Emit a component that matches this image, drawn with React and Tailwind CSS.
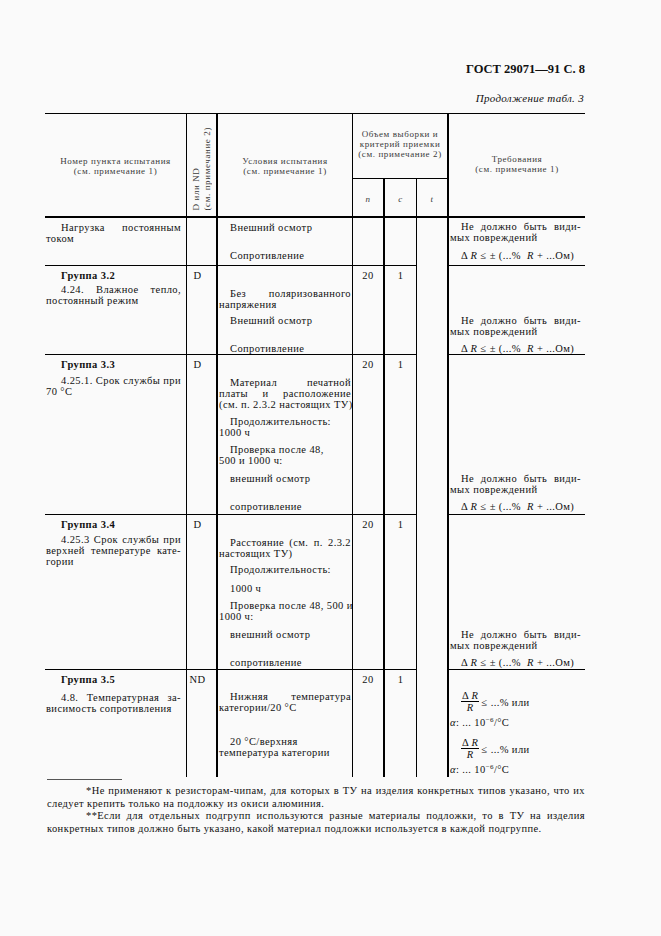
import React from 'react';

// column grid shared by header and body rows: 45 | 186 | 216 | 352 | 383 | 416 | 447 | 585
const COLS = 'grid grid-cols-[141px_30px_136px_31px_33px_31px_138px]';

const Line = ({ j, className = '', children }) => (
  <div className={`whitespace-nowrap ${j ? 'text-justify [text-align-last:justify]' : ''} ${className}`}>
    {children}
  </div>
);

const DeltaR = ({ className = '' }) => (
  <Line className={`pl-[11px] ${className}`}>
    Δ <i>R</i> ≤ ± (...%{'\u00a0\u00a0'}<i>R</i> + ...Ом)
  </Line>
);

const NoDamage = ({ className = '' }) => (
  <>
    <Line j className={`pl-[11px] ${className}`}>Не должно быть види-</Line>
    <Line>мых повреждений</Line>
  </>
);

const Frac = ({ className = '' }) => (
  <div className={`flex items-center pl-[11px] ${className}`}>
    <span className="flex flex-col items-center">
      <span className="border-b border-black px-[1px] leading-[10px]">Δ <i>R</i></span>
      <span className="leading-[10px] pt-[1px]"><i>R</i></span>
    </span>
    <span className="ml-[2px] mt-[1px] whitespace-nowrap">≤ ...% или</span>
  </div>
);

const Alpha = ({ className = '' }) => (
  <Line className={className}>
    <i>α</i>: ... 10<span className="relative -top-[4px] text-[7px]">−6</span>/°С
  </Line>
);

const Row = ({ h, last, a, d, cond, n, c, req }) => {
  const b = last ? '' : 'border-b border-black';
  return (
    <div className={`${COLS} ${h}`}>
      <div className={`pl-[1px] pr-[5px] ${b}`}>{a}</div>
      <div className={`flex justify-center pr-[8px] border-l border-black ${b}`}>{d}</div>
      <div className={`px-[1px] border-l-2 border-black ${b}`}>{cond}</div>
      <div className={`text-center border-l border-black ${b}`}>{n}</div>
      <div className={`text-center border-l-2 border-black ${b}`}>{c}</div>
      <div className="border-l border-black" />
      <div className={`pl-[1px] pr-[4px] border-l-2 border-black ${b}`}>{req}</div>
    </div>
  );
};

export default function App() {
  return (
    <div className="min-h-[936px] w-[661px] bg-[#fafafa] text-[#111] font-['Liberation_Serif',serif]">
      <div className="ml-[45px] w-[540px] pt-[62px]">
        <div className="text-right text-[12.5px] leading-[14px] font-bold">ГОСТ 29071—91 С. 8</div>
        <div className="mt-[16px] text-right text-[11px] leading-[12px] italic tracking-[0.3px] pr-[1px]">
          Продолжение табл. 3
        </div>

        {/* header */}
        <div className={`${COLS} grid-rows-[64px_38px] mt-[9px] border-t border-b-2 border-black text-[9px] leading-[10px] tracking-[0.6px] text-[#3a3a3a]`}>
          <div className="row-span-2 flex flex-col items-center justify-center pt-[2px]">
            <div>Номер пункта испытания</div>
            <div>(см. примечание 1)</div>
          </div>
          <div className="row-span-2 flex items-end justify-center pb-[6px] border-l border-black">
            <div className="[writing-mode:vertical-rl] rotate-180 leading-[11px] whitespace-nowrap">
              <div>D или ND</div>
              <div>(см. примечание 2)</div>
            </div>
          </div>
          <div className="row-span-2 flex flex-col items-center justify-center pt-[2px] border-l-2 border-black">
            <div>Условия испытания</div>
            <div>(см. примечание 1)</div>
          </div>
          <div className="col-span-3 flex flex-col items-center justify-center pb-[4px] border-l border-black">
            <div>Объем выборки и</div>
            <div>критерий приемки</div>
            <div>(см. примечание 2)</div>
          </div>
          <div className="row-span-2 flex flex-col items-center justify-center pb-[3px] border-l-2 border-black">
            <div>Требования</div>
            <div>(см. примечание 1)</div>
          </div>
          <div className="flex items-center justify-center pt-[3px] italic border-l border-t border-black">n</div>
          <div className="flex items-center justify-center pt-[3px] italic border-l-2 border-t border-black">c</div>
          <div className="flex items-center justify-center pt-[3px] italic border-l border-t border-black">t</div>
        </div>

        {/* body */}
        <div className="text-[10.5px] leading-[11px] tracking-[0.4px]">
          <Row
            h="h-[48px]"
            a={
              <>
                <Line j className="pl-[15px] mt-[4px]">Нагрузка постоянным</Line>
                <Line>током</Line>
              </>
            }
            cond={
              <>
                <Line className="pl-[11px] mt-[4px]">Внешний осмотр</Line>
                <Line className="pl-[11px] mt-[17px]">Сопротивление</Line>
              </>
            }
            req={
              <>
                <NoDamage className="mt-[3px]" />
                <DeltaR className="mt-[7px]" />
              </>
            }
          />

          <Row
            h="h-[89px]"
            a={
              <>
                <Line className="pl-[15px] mt-[4px] font-bold">Группа 3.2</Line>
                <Line j className="pl-[15px] mt-[3px]">4.24. Влажное тепло,</Line>
                <Line>постоянный режим</Line>
              </>
            }
            d={<Line className="mt-[4px]">D</Line>}
            cond={
              <>
                <Line j className="pl-[11px] mt-[22px]">Без поляризованного</Line>
                <Line>напряжения</Line>
                <Line className="pl-[11px] mt-[5px]">Внешний осмотр</Line>
                <Line className="pl-[11px] mt-[17px]">Сопротивление</Line>
              </>
            }
            n={<Line className="mt-[4px]">20</Line>}
            c={<Line className="mt-[4px]">1</Line>}
            req={
              <>
                <NoDamage className="mt-[49px]" />
                <DeltaR className="mt-[6px]" />
              </>
            }
          />

          <Row
            h="h-[160px]"
            a={
              <>
                <Line className="pl-[15px] mt-[4px] font-bold">Группа 3.3</Line>
                <Line j className="pl-[15px] mt-[5px]">4.25.1. Срок службы при</Line>
                <Line>70 °С</Line>
              </>
            }
            d={<Line className="mt-[4px]">D</Line>}
            cond={
              <>
                <Line j className="pl-[11px] mt-[22px]">Материал печатной</Line>
                <Line j>платы и расположение</Line>
                <Line j>(см. п. 2.3.2 настоящих ТУ)</Line>
                <Line className="pl-[11px] mt-[6px]">Продолжительность:</Line>
                <Line>1000 ч</Line>
                <Line className="pl-[11px] mt-[6px]">Проверка после 48,</Line>
                <Line>500 и 1000 ч:</Line>
                <Line className="pl-[11px] mt-[7px]">внешний осмотр</Line>
                <Line className="pl-[11px] mt-[17px]">сопротивление</Line>
              </>
            }
            n={<Line className="mt-[4px]">20</Line>}
            c={<Line className="mt-[4px]">1</Line>}
            req={
              <>
                <NoDamage className="mt-[118px]" />
                <DeltaR className="mt-[6px]" />
              </>
            }
          />

          <Row
            h="h-[155px]"
            a={
              <>
                <Line className="pl-[15px] mt-[4px] font-bold">Группа 3.4</Line>
                <Line j className="pl-[15px] mt-[4px]">4.25.3 Срок службы при</Line>
                <Line j>верхней температуре кате-</Line>
                <Line>гории</Line>
              </>
            }
            d={<Line className="mt-[4px]">D</Line>}
            cond={
              <>
                <Line j className="pl-[11px] mt-[22px]">Расстояние (см. п. 2.3.2</Line>
                <Line>настоящих ТУ)</Line>
                <Line className="pl-[11px] mt-[5px]">Продолжительность:</Line>
                <Line className="pl-[11px] mt-[8px]">1000 ч</Line>
                <Line j className="pl-[11px] mt-[6px]">Проверка после 48, 500 и</Line>
                <Line>1000 ч:</Line>
                <Line className="pl-[11px] mt-[7px]">внешний осмотр</Line>
                <Line className="pl-[11px] mt-[17px]">сопротивление</Line>
              </>
            }
            n={<Line className="mt-[4px]">20</Line>}
            c={<Line className="mt-[4px]">1</Line>}
            req={
              <>
                <NoDamage className="mt-[114px]" />
                <DeltaR className="mt-[6px]" />
              </>
            }
          />

          <Row
            h="h-[105px]"
            last
            a={
              <>
                <Line className="pl-[15px] mt-[4px] font-bold">Группа 3.5</Line>
                <Line j className="pl-[15px] mt-[7px]">4.8. Температурная за-</Line>
                <Line>висимость сопротивления</Line>
              </>
            }
            d={<Line className="mt-[4px]">ND</Line>}
            cond={
              <>
                <Line j className="pl-[11px] mt-[21px]">Нижняя температура</Line>
                <Line>категории/20 °С</Line>
                <Line className="pl-[11px] mt-[23px]">20 °С/верхняя</Line>
                <Line>температура категории</Line>
              </>
            }
            n={<Line className="mt-[4px]">20</Line>}
            c={<Line className="mt-[4px]">1</Line>}
            req={
              <>
                <Frac className="mt-[21px]" />
                <Alpha className="mt-[4px]" />
                <Frac className="mt-[8px]" />
                <Alpha className="mt-[4px]" />
              </>
            }
          />
        </div>

        {/* footnotes */}
        <div className="mt-[4px] ml-[2px] w-[75px] border-t border-[#555]" />
        <div className="mt-[5px] ml-[2px] text-[10.5px] leading-[12.7px] tracking-[0.4px]">
          <Line j className="pl-[39px]">
            *Не применяют к резисторам-чипам, для которых в ТУ на изделия конкретных типов указано, что их
          </Line>
          <Line>следует крепить только на подложку из окиси алюминия.</Line>
          <Line j className="pl-[39px]">
            **Если для отдельных подгрупп используются разные материалы подложки, то в ТУ на изделия
          </Line>
          <Line>конкретных типов должно быть указано, какой материал подложки используется в каждой подгруппе.</Line>
        </div>
      </div>
    </div>
  );
}
